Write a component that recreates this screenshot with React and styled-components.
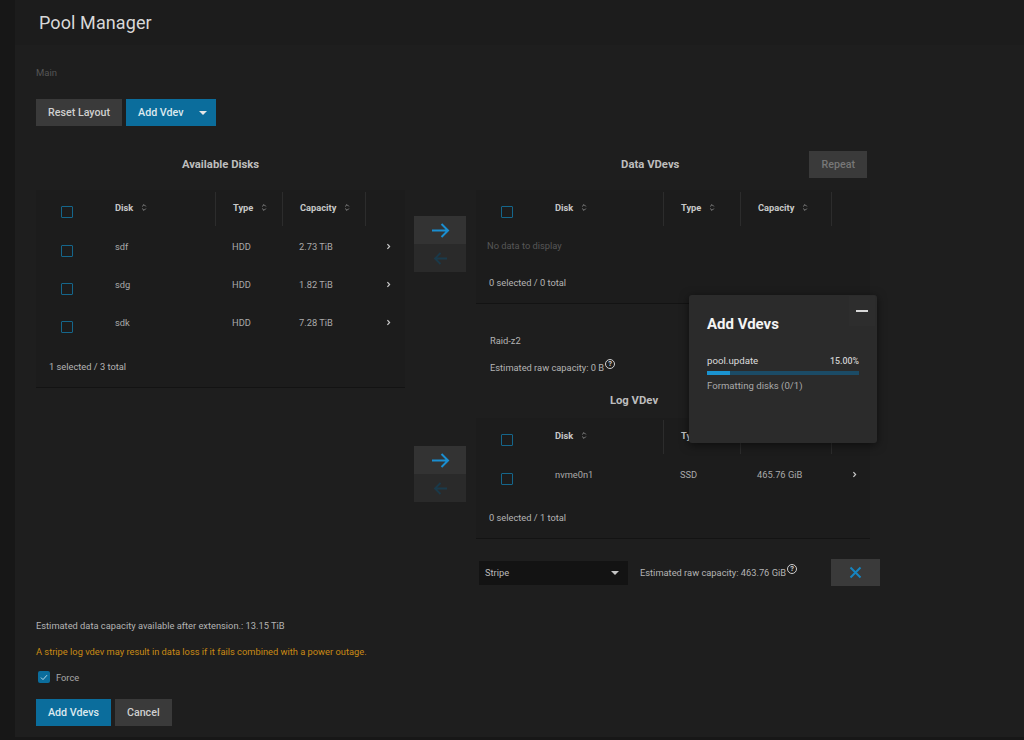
import React from "react";
import styled, { createGlobalStyle } from "styled-components";

const Global = createGlobalStyle`
  html, body { margin: 0; padding: 0; background: #171717; }
  body { font-family: Roboto, "Liberation Sans", sans-serif; color: #bbb; }
  * { box-sizing: border-box; }
`;

const Shell = styled.div`
  display: flex;
  min-height: 740px;
  width: 1024px;
  background: #171717;
`;

const SideStrip = styled.div`
  width: 15px;
  flex: none;
  background: #171717;
`;

const Main = styled.main`
  position: relative;
  flex: 1;
  background: #1e1e1e;
  padding-bottom: 11px;
  height: 737px;
`;

const PageHeader = styled.header`
  height: 45px;
  display: flex;
  align-items: center;
  padding-left: 24px;
  background: #1c1c1c;
`;

const PageTitle = styled.h1`
  margin: 0;
  font-family: Roboto, "Noto Sans", sans-serif;
  font-weight: 400;
  font-size: 18px;
  color: #d8d8d8;
  letter-spacing: 0.1px;
`;

const Content = styled.div`
  padding-left: 21px;
`;

const Breadcrumb = styled.div`
  margin-top: 22px;
  font-size: 9.5px;
  line-height: 12px;
  color: #555;
`;

const Toolbar = styled.div`
  margin-top: 20px;
  display: flex;
  gap: 4px;
`;

const Button = styled.button`
  height: 27px;
  border: none;
  border-radius: 0;
  padding: 0 ${(p) => p.$pr ?? p.$px ?? 12}px 0 ${(p) => p.$px ?? 12}px;
  display: inline-flex;
  align-items: center;
  gap: 15px;
  font-family: Roboto, sans-serif;
  font-weight: 500;
  font-size: 10.7px;
  background: ${(p) => (p.$primary ? "#0b6d9c" : "#3a3a3a")};
  color: ${(p) => (p.$disabled ? "#777" : p.$primary ? "#dde9ef" : "#cfcfcf")};
  cursor: pointer;
`;

const Caret = styled.span`
  width: 0;
  height: 0;
  border-left: 4px solid transparent;
  border-right: 4px solid transparent;
  border-top: 4px solid ${(p) => p.$color || "#e6e6e6"};
`;

const Workspace = styled.div`
  margin-top: 25px;
  display: flex;
  align-items: flex-start;
`;

const LeftCol = styled.section`
  width: 369px;
  flex: none;
`;

const SectionHead = styled.div`
  height: 27px;
  display: flex;
  align-items: center;
  justify-content: center;
`;

const SectionTitle = styled.h2`
  margin: 0;
  font-size: 11.3px;
  font-weight: 700;
  color: #bdbdbd;
  flex: ${(p) => (p.$grow ? 1 : "none")};
  text-align: center;
  padding-left: ${(p) => p.$pl || 0}px;
  padding-right: ${(p) => p.$pr || 0}px;
`;

const RightArea = styled.section`
  margin-left: 9px;
  width: 466px;
  flex: none;
  display: flex;
  flex-direction: column;
`;

const VdevHead = styled.div`
  height: 27px;
  margin-left: 62px;
  width: 394px;
  display: flex;
  align-items: center;
  margin-top: ${(p) => p.$mt || 0}px;
`;

const Group = styled.div`
  display: flex;
  align-items: flex-start;
  margin-top: ${(p) => p.$mt || 0}px;
`;

const Arrows = styled.div`
  width: 52px;
  flex: none;
  display: flex;
  flex-direction: column;
  margin-top: ${(p) => p.$mt || 0}px;
  margin-right: 10px;
`;

const ArrowBtn = styled.div`
  height: 28px;
  display: flex;
  align-items: center;
  justify-content: center;
  background: ${(p) => (p.$active ? "#333333" : "#2a2a2a")};
`;

const Table = styled.div`
  width: ${(p) => p.$w}px;
  flex: none;
  background: #1c1c1c;
  border-bottom: 1px solid #131313;
  margin-top: ${(p) => p.$mt || 0}px;
`;

const Row = styled.div`
  display: grid;
  grid-template-columns: ${(p) => p.$cols};
  height: ${(p) => p.$h || 38}px;
  align-items: center;
`;

const HeadCell = styled.div`
  height: calc(100% - 4px);
  display: flex;
  align-items: center;
  gap: 8px;
  padding-left: ${(p) => p.$pl ?? 17}px;
  padding-bottom: 4px;
  font-size: 9.3px;
  font-weight: 700;
  color: #c8c8c8;
  border-left: ${(p) => (p.$sep ? "1px solid #2c2c2c" : "none")};
  margin: 2px 0;
  justify-content: ${(p) => (p.$center ? "center" : "flex-start")};
`;

const Cell = styled.div`
  display: flex;
  align-items: center;
  padding-left: ${(p) => p.$pl ?? 17}px;
  padding-bottom: 2px;
  font-size: 9.3px;
  color: #aaa;
  justify-content: ${(p) => (p.$center ? "center" : "flex-start")};
`;

const Check = styled.span`
  width: 12px;
  height: 12px;
  margin-top: ${(p) => (p.$head ? 10 : 9)}px;
  border: 1.5px solid #15668b;
  border-radius: 1px;
  display: inline-block;
`;

const EmptyRow = styled.div`
  height: 36px;
  display: flex;
  align-items: center;
  padding-left: 11px;
  padding-bottom: 2px;
  font-size: 9.3px;
  color: #575757;
`;

const TableFoot = styled.div`
  padding: ${(p) => p.$pt ?? 18}px 13px 14px;
  font-size: 9.3px;
  line-height: 12px;
  color: #b4b4b4;
`;

const InfoLine = styled.div`
  margin-left: 76px;
  margin-top: ${(p) => p.$mt || 0}px;
  font-size: 9.3px;
  line-height: 12px;
  color: #b4b4b4;
  display: flex;
  align-items: flex-start;
`;

const Help = styled.span`
  display: inline-flex;
  align-items: center;
  justify-content: center;
  width: 10px;
  height: 10px;
  margin-left: 1px;
  margin-top: -3px;
  border: 1px solid #d0d0d0;
  border-radius: 50%;
  font-size: 7.5px;
  font-weight: 700;
  line-height: 1;
  color: #d0d0d0;
`;

const StripeRow = styled.div`
  margin-top: 20px;
  margin-left: 65px;
  width: 401px;
  display: flex;
  align-items: center;
`;

const Select = styled.div`
  width: 149px;
  height: 24px;
  background: #131313;
  display: flex;
  align-items: center;
  justify-content: space-between;
  padding: 0 9px 0 6px;
  font-size: 9.3px;
  color: #bbb;
`;

const StripeInfo = styled.div`
  margin-left: 12px;
  font-size: 9.3px;
  color: #b4b4b4;
  display: flex;
  align-items: flex-start;
`;

const IconButton = styled.div`
  margin-left: auto;
  width: 49px;
  height: 27px;
  background: #3a3a3a;
  display: flex;
  align-items: center;
  justify-content: center;
`;

const BottomText = styled.p`
  margin: ${(p) => p.$mt}px 0 0;
  font-size: 9.3px;
  line-height: 12px;
  color: ${(p) => (p.$warn ? "#c98a14" : "#b4b4b4")};
`;

const ForceRow = styled.label`
  margin-top: 13px;
  margin-left: 2px;
  display: flex;
  align-items: center;
  gap: 6px;
  font-size: 9.3px;
  color: #a8a8a8;
`;

const FilledCheck = styled.span`
  width: 12px;
  height: 12px;
  border-radius: 2px;
  background: #0b6d9c;
  display: flex;
  align-items: center;
  justify-content: center;
`;

const Actions = styled.div`
  margin-top: 16px;
  display: flex;
  gap: 4px;
`;

const JobPanel = styled.div`
  position: absolute;
  left: 674px;
  top: 295px;
  width: 188px;
  height: 148px;
  background: #2b2b2b;
  border-radius: 3px;
  box-shadow: 0 2px 10px rgba(0, 0, 0, 0.55);
  padding: 0 18px;
`;

const MinBtn = styled.div`
  position: absolute;
  right: 2px;
  top: 1px;
  width: 26px;
  height: 30px;
  display: flex;
  align-items: center;
  justify-content: center;
  background: #2d2d2d;
  &::after {
    content: "";
    width: 12px;
    height: 2px;
    background: #d8d8d8;
  }
`;

const JobTitle = styled.h3`
  margin: 20px 0 0;
  font-size: 15px;
  line-height: 18px;
  font-weight: 700;
  color: #f4f4f4;
`;

const JobLine = styled.div`
  margin-top: 22px;
  display: flex;
  justify-content: space-between;
  align-items: baseline;
  font-size: 9.7px;
  color: #dcdcdc;
`;

const Pct = styled.span`
  font-size: 8.8px;
  font-weight: 500;
  color: #cfcfcf;
`;

const Track = styled.div`
  margin-top: 5px;
  height: 4px;
  background: #1b4b66;
`;

const Fill = styled.div`
  height: 100%;
  background: #1a93d0;
`;

const JobDesc = styled.div`
  margin-top: 5px;
  font-size: 9.6px;
  color: #a9a9a9;
`;

const SortIcon = () => (
  <svg width="6" height="9" viewBox="0 0 6 9">
    <path d="M1.2 3.4 L3 1.6 L4.8 3.4 M1.2 5.6 L3 7.4 L4.8 5.6" stroke="#8a8a8a" strokeWidth="1" fill="none" />
  </svg>
);

const Chevron = () => (
  <svg width="5" height="7" viewBox="0 0 5 7">
    <path d="M1.4 1.2 L3.6 3.5 L1.4 5.8" stroke="#c8c8c8" strokeWidth="1.2" fill="none" />
  </svg>
);

const ArrowRight = () => (
  <svg width="19" height="15" viewBox="0 0 19 15">
    <path d="M1 7.5 H17 M10.5 1 L17 7.5 L10.5 14" stroke="#1a8ed0" strokeWidth="2" fill="none" />
  </svg>
);

const ArrowLeft = () => (
  <svg width="15" height="13" viewBox="0 0 15 13">
    <path d="M14 6.5 H2 M7.5 1 L2 6.5 L7.5 12" stroke="#1a3a4b" strokeWidth="1.8" fill="none" />
  </svg>
);

const XIcon = () => (
  <svg width="13" height="13" viewBox="0 0 13 13">
    <path d="M1.5 1.5 L11.5 11.5 M11.5 1.5 L1.5 11.5" stroke="#1784bf" strokeWidth="2" fill="none" />
  </svg>
);

const TickIcon = () => (
  <svg width="8" height="7" viewBox="0 0 8 7">
    <path d="M1 3.6 L3 5.6 L7 1.2" stroke="#b9dbea" strokeWidth="1" fill="none" />
  </svg>
);

const LEFT_COLS = "62px 117px 67px 83px 1fr";
const RIGHT_COLS = "62px 125px 77px 91px 1fr";

const HeaderRow = ({ cols }) => (
  <Row $cols={cols}>
    <HeadCell $pl={0} $center>
      <Check $head />
    </HeadCell>
    <HeadCell>
      Disk <SortIcon />
    </HeadCell>
    <HeadCell $sep>
      Type <SortIcon />
    </HeadCell>
    <HeadCell $sep>
      Capacity <SortIcon />
    </HeadCell>
    <HeadCell $sep />
  </Row>
);

const DiskRow = ({ cols, name, type, cap }) => (
  <Row $cols={cols}>
    <Cell $pl={0} $center>
      <Check />
    </Cell>
    <Cell>{name}</Cell>
    <Cell>{type}</Cell>
    <Cell>{cap}</Cell>
    <Cell $pl={21}>
      <Chevron />
    </Cell>
  </Row>
);

const ArrowPair = ({ mt }) => (
  <Arrows $mt={mt}>
    <ArrowBtn $active>
      <ArrowRight />
    </ArrowBtn>
    <ArrowBtn>
      <ArrowLeft />
    </ArrowBtn>
  </Arrows>
);

const disks = [
  { name: "sdf", type: "HDD", cap: "2.73 TiB" },
  { name: "sdg", type: "HDD", cap: "1.82 TiB" },
  { name: "sdk", type: "HDD", cap: "7.28 TiB" },
];

export default function App() {
  return (
    <Shell>
      <Global />
      <SideStrip />
      <Main>
        <PageHeader>
          <PageTitle>Pool Manager</PageTitle>
        </PageHeader>
        <Content>
          <Breadcrumb>Main</Breadcrumb>
          <Toolbar>
            <Button>Reset Layout</Button>
            <Button $primary $px={12} $pr={9}>
              Add Vdev
              <Caret />
            </Button>
          </Toolbar>

          <Workspace>
            <LeftCol>
              <SectionHead>
                <SectionTitle>Available Disks</SectionTitle>
              </SectionHead>
              <Table $w={369} $mt={12}>
                <HeaderRow cols={LEFT_COLS} />
                {disks.map((d) => (
                  <DiskRow key={d.name} cols={LEFT_COLS} {...d} />
                ))}
                <TableFoot $pt={19}>1 selected / 3 total</TableFoot>
              </Table>
            </LeftCol>

            <RightArea>
              <VdevHead>
                <SectionTitle $grow $pl={15}>Data VDevs</SectionTitle>
                <Button $disabled $px={12} style={{ marginRight: 3 }}>
                  Repeat
                </Button>
              </VdevHead>
              <Group $mt={12}>
                <ArrowPair mt={26} />
                <Table $w={394}>
                  <HeaderRow cols={RIGHT_COLS} />
                  <EmptyRow>No data to display</EmptyRow>
                  <TableFoot $pt={13}>0 selected / 0 total</TableFoot>
                </Table>
              </Group>

              <InfoLine $mt={31}>Raid-z2</InfoLine>
              <InfoLine $mt={15}>
                Estimated raw capacity: 0 B<Help>?</Help>
              </InfoLine>

              <VdevHead $mt={13}>
                <SectionTitle $grow $pr={78}>Log VDev</SectionTitle>
              </VdevHead>
              <Group $mt={4}>
                <ArrowPair mt={28} />
                <Table $w={394}>
                  <HeaderRow cols={RIGHT_COLS} />
                  <DiskRow cols={RIGHT_COLS} name="nvme0n1" type="SSD" cap="465.76 GiB" />
                  <TableFoot $pt={18}>0 selected / 1 total</TableFoot>
                </Table>
              </Group>

              <StripeRow>
                <Select>
                  Stripe
                  <Caret $color="#c4c4c4" />
                </Select>
                <StripeInfo>
                  Estimated raw capacity: 463.76 GiB<Help>?</Help>
                </StripeInfo>
                <IconButton>
                  <XIcon />
                </IconButton>
              </StripeRow>
            </RightArea>
          </Workspace>

          <BottomText $mt={34}>
            Estimated data capacity available after extension.: 13.15 TiB
          </BottomText>
          <BottomText $mt={14} $warn>
            A stripe log vdev may result in data loss if it fails combined with a power outage.
          </BottomText>
          <ForceRow>
            <FilledCheck>
              <TickIcon />
            </FilledCheck>
            Force
          </ForceRow>
          <Actions>
            <Button $primary>Add Vdevs</Button>
            <Button>Cancel</Button>
          </Actions>
        </Content>

        <JobPanel>
          <MinBtn />
          <JobTitle>Add Vdevs</JobTitle>
          <JobLine>
            <span>pool.update</span>
            <Pct>15.00%</Pct>
          </JobLine>
          <Track>
            <Fill style={{ width: "15%" }} />
          </Track>
          <JobDesc>Formatting disks (0/1)</JobDesc>
        </JobPanel>
      </Main>
    </Shell>
  );
}
